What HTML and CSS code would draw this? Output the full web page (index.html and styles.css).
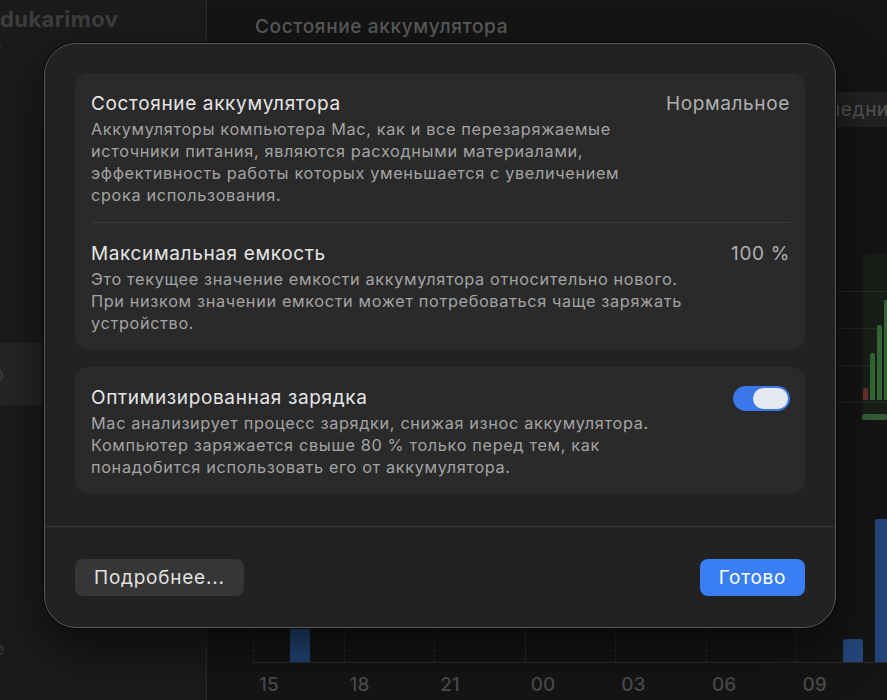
FILE: index.html
```html
<!DOCTYPE html>
<html lang="ru">
<head>
    <meta charset="UTF-8">
    <meta name="viewport" content="width=device-width, initial-scale=1.0">
    <title>Состояние аккумулятора</title>
    <link rel="stylesheet" href="styles.css">
</head>
<body>
    <div class="app">
        <aside class="sidebar">
            <div class="user-name">odukarimov</div>
            <div class="user-sub">e</div>
            <div class="side-item">o</div>
            <div class="side-foot">e</div>
        </aside>
        <main class="content">
            <h1 class="page-title">Состояние аккумулятора</h1>
            <div class="segmented">
                <span class="seg">Последние 24 часа</span>
                <span class="seg seg-active">Последние 10 дней</span>
            </div>
            <div class="level-chart">
                <div class="level-area"></div>
                <div class="level-bar red" style="left: 25px; height: 12px;"></div>
                <div class="level-bar" style="left: 32px; height: 47px;"></div>
                <div class="level-bar" style="left: 39px; height: 75px;"></div>
                <div class="level-bar" style="left: 46px; height: 100px;"></div>
                <div class="level-strip"></div>
            </div>
            <div class="usage-chart">
                <div class="usage-cols">
                    <div class="col"><span>15</span></div>
                    <div class="col"><span>18</span></div>
                    <div class="col"><span>21</span></div>
                    <div class="col midnight"><span>00</span></div>
                    <div class="col"><span>03</span></div>
                    <div class="col"><span>06</span></div>
                    <div class="col"><span>09</span></div>
                </div>
                <div class="usage-bar" style="left: 37px; height: 150px;"></div>
                <div class="usage-bar" style="left: 590px; height: 23px;"></div>
                <div class="usage-bar" style="left: 622px; height: 143px;"></div>
            </div>
        </main>
    </div>

    <div class="overlay">
        <div class="sheet">
            <div class="sheet-body">
                <div class="group">
                    <div class="row">
                        <div class="row-head">
                            <span class="row-title">Состояние аккумулятора</span>
                            <span class="row-value">Нормальное</span>
                        </div>
                        <p class="row-desc">Аккумуляторы компьютера Mac, как и все перезаряжаемые<br>источники питания, являются расходными материалами,<br>эффективность работы которых уменьшается с увеличением<br>срока использования.</p>
                    </div>
                    <div class="row">
                        <div class="row-head">
                            <span class="row-title">Максимальная емкость</span>
                            <span class="row-value">100 %</span>
                        </div>
                        <p class="row-desc">Это текущее значение емкости аккумулятора относительно нового.<br>При низком значении емкости может потребоваться чаще заряжать<br>устройство.</p>
                    </div>
                </div>
                <div class="group">
                    <div class="row">
                        <div class="row-head">
                            <span class="row-title">Оптимизированная зарядка</span>
                            <span class="toggle on"><span class="knob"></span></span>
                        </div>
                        <p class="row-desc">Mac анализирует процесс зарядки, снижая износ аккумулятора.<br>Компьютер заряжается свыше 80 % только перед тем, как<br>понадобится использовать его от аккумулятора.</p>
                    </div>
                </div>
            </div>
            <div class="sheet-footer">
                <button class="btn">Подробнее...</button>
                <button class="btn btn-primary">Готово</button>
            </div>
        </div>
    </div>
</body>
</html>
```

FILE: styles.css
```css
* {
    box-sizing: border-box;
}
body {
    margin: 0;
    background: #151515;
    font-family: Inter, "Noto Sans", sans-serif;
    letter-spacing: 0.04em;
    overflow: hidden;
}
.app {
    display: flex;
    height: 700px;
}
.sidebar {
    width: 207px;
    flex-shrink: 0;
    background: #1b1b1b;
    border-right: 1px solid #2a2a2a;
    overflow: hidden;
}
.user-name {
    margin: 6px 0 0 -14px;
    font-size: 22px;
    font-weight: 700;
    letter-spacing: 0.02em;
    color: #3e3e3e;
    white-space: nowrap;
}
.user-sub {
    margin: 6px 0 0 -7px;
    font-size: 14px;
    color: #3e3e3e;
}
.side-item {
    margin-top: 288px;
    width: 42px;
    height: 62px;
    background: #262626;
    color: #404040;
    font-size: 20px;
    line-height: 62px;
    text-indent: -8px;
}
.side-foot {
    margin: 233px 0 0 -6px;
    font-size: 18px;
    color: #3a3a3a;
}
.content {
    flex: 1;
    padding-left: 48px;
    overflow: hidden;
}
.page-title {
    margin: 15px 0 0;
    font-size: 19px;
    font-weight: 500;
    color: #5a5a5a;
}
.segmented {
    display: flex;
    margin: 54px 0 0 306px;
    width: 440px;
    height: 35px;
    background: #222;
    border-radius: 7px;
}
.seg {
    flex: 1;
    padding-left: 10px;
    line-height: 35px;
    font-size: 19px;
    color: #555;
    white-space: nowrap;
}
.level-chart {
    position: relative;
    margin: 128px 0 0 583px;
    height: 165px;
    background:
        repeating-linear-gradient(to bottom, transparent 0 36px, #262626 36px 37px);
}
.level-area {
    position: absolute;
    left: 24px;
    top: 0;
    right: 0;
    bottom: 0;
    background: rgba(60, 120, 60, 0.1);
}
.level-bar {
    position: absolute;
    bottom: 20px;
    width: 5px;
    background: #356535;
    border-radius: 2px 2px 0 0;
}
.level-bar.red {
    background: #6a3030;
}
.level-strip {
    position: absolute;
    left: 24px;
    right: 0;
    bottom: 0;
    height: 6px;
    background: #355f35;
    border-radius: 2px;
}
.usage-chart {
    position: relative;
    margin: 50px 0 0 -2px;
    height: 193px;
    border-bottom: 1px solid #2a2a2a;
}
.usage-cols {
    display: flex;
    height: 100%;
}
.col {
    width: 92.3px;
    border-left: 1px dashed #2a2a2a;
    position: relative;
}
.col.midnight {
    border-left-style: solid;
}
.col span {
    position: absolute;
    left: 5px;
    top: 203px;
    font-size: 19px;
    font-weight: 500;
    letter-spacing: 0;
    color: #4a4a4a;
}
.usage-bar {
    position: absolute;
    bottom: 0;
    width: 20px;
    background: #23467a;
    border-radius: 3px 3px 0 0;
}
.overlay {
    position: absolute;
    left: 44px;
    top: 43px;
}
.sheet {
    width: 792px;
    height: 585px;
    background: #222222;
    border: 1px solid #575757;
    border-radius: 32px;
    box-shadow: 0 0 0 1px #0a0a0a, 0 20px 50px rgba(0, 0, 0, 0.6);
    display: flex;
    flex-direction: column;
}
.sheet-body {
    padding: 29px 30px 32px;
    display: flex;
    flex-direction: column;
    gap: 17px;
    border-bottom: 1px solid #383838;
}
.group {
    background: #2a2a2a;
    border-radius: 14px;
    padding: 0 15px 0 16px;
}
.row {
    padding: 19px 0 16px;
}
.row + .row {
    border-top: 1px solid #3a3a3a;
}
.row-head {
    display: flex;
    justify-content: space-between;
    align-items: center;
    height: 22px;
}
.row-title {
    font-size: 19px;
    color: #e6e6e6;
}
.row-value {
    font-size: 19px;
    color: #b0b0b0;
}
.row-desc {
    margin: 4px 0 0;
    font-size: 16.3px;
    line-height: 22px;
    color: #a4a4a4;
}
.toggle {
    width: 57px;
    height: 25px;
    border-radius: 13px;
    background: #3a77e8;
    display: flex;
    align-items: center;
    justify-content: flex-end;
    padding-right: 2px;
    margin-top: 2px;
}
.knob {
    width: 35px;
    height: 21px;
    border-radius: 11px;
    background: #e6e9f1;
}
.sheet-footer {
    display: flex;
    justify-content: space-between;
    padding: 32px 30px 0;
}
.btn {
    height: 37px;
    padding: 0 19px;
    border: none;
    border-radius: 8px;
    background: #363636;
    color: #e2e2e2;
    font-family: inherit;
    font-size: 19px;
    letter-spacing: 0.04em;
}
.btn-primary {
    width: 105px;
    padding: 0;
    background: #3a7ef4;
    color: #fff;
}
```
